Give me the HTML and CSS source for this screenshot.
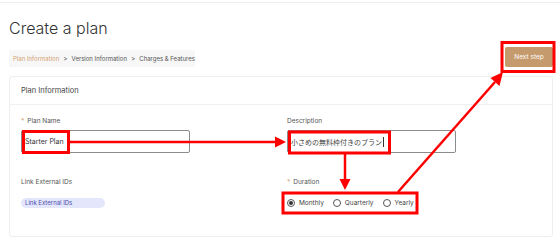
FILE: index.html
```html
<!DOCTYPE html>
<html lang="en">
<head>
<meta charset="utf-8">
<link rel="stylesheet" href="styles.css">
</head>
<body>
<div class="topbar"></div>
<div class="page">
  <h1 class="title">Create a plan</h1>
  <div class="toolbar">
    <nav class="crumbs">
      <span class="crumb active">Plan Information</span>
      <span class="sep">&gt;</span>
      <span class="crumb">Version Information</span>
      <span class="sep">&gt;</span>
      <span class="crumb">Charges &amp; Features</span>
    </nav>
    <button class="next">Next step</button>
  </div>
  <section class="card">
    <div class="card-head">Plan Information</div>
    <div class="card-body">
      <div class="field">
        <label class="label"><span class="req">*</span>Plan Name</label>
        <div class="input">Starter Plan</div>
      </div>
      <div class="field">
        <label class="label">Description</label>
        <div class="input jp">小さめの無料枠付きのプラン<span class="caret"></span></div>
      </div>
      <div class="field">
        <label class="label">Link External IDs</label>
        <div class="pill-row"><span class="pill">Link External IDs</span></div>
      </div>
      <div class="field">
        <label class="label"><span class="req">*</span>Duration</label>
        <div class="radios">
          <span class="radio checked"><span class="dot"></span>Monthly</span>
          <span class="radio"><span class="dot"></span>Quarterly</span>
          <span class="radio"><span class="dot"></span>Yearly</span>
        </div>
      </div>
    </div>
  </section>
</div>
<svg class="overlay" width="560" height="244" viewBox="0 0 560 244">
  <g fill="none" stroke="#f00" stroke-width="3">
    <rect x="502" y="42.5" width="52" height="29"/>
    <rect x="23.5" y="131.5" width="45" height="21"/>
    <rect x="289.5" y="132" width="100" height="21"/>
    <rect x="283" y="193" width="134" height="20"/>
  </g>
  <g stroke="#f00" stroke-width="2.5">
    <line x1="69" y1="142" x2="276" y2="142"/>
    <line x1="345" y1="153" x2="345" y2="180"/>
    <line x1="398" y1="192" x2="495" y2="82"/>
  </g>
  <g fill="#f00">
    <polygon points="286,142 275,136.5 275,147.5"/>
    <polygon points="345,190 339.5,179 350.5,179"/>
    <polygon points="503,72 499.5,86 490.5,78"/>
  </g>
</svg>
</body>
</html>
```

FILE: styles.css
```css
* { box-sizing: border-box; }
html, body { margin: 0; padding: 0; background: #fff; }
body {
  width: 560px;
  height: 244px;
  overflow: hidden;
  position: relative;
  font-family: Inter, "Liberation Sans", "Noto Sans CJK JP", sans-serif;
  color: #444;
}
.topbar { height: 3px; border-bottom: 1px solid #eeeeee; }
.page { padding: 0 7px 0 9px; }
.title {
  margin: 14px 0 0 0;
  font-size: 16px;
  font-weight: 300;
  color: #333;
  line-height: 22px;
  letter-spacing: 0;
}
.toolbar {
  display: flex;
  justify-content: space-between;
  align-items: flex-end;
  margin-top: 8px;
}
.crumbs {
  display: flex;
  align-items: center;
  gap: 4px;
  height: 17px;
  padding: 0 4px;
  background: #f7f7f7;
  font-size: 6px;
  color: #555;
  width: 186px;
  white-space: nowrap;
  flex-shrink: 0;
}
.crumb.active { color: #d4a373; }
.sep { color: #666; font-size: 6.5px; }
.next {
  width: 48px;
  height: 20px;
  border: none;
  border-radius: 2px;
  background: #c59a6d;
  color: #fff;
  font-family: inherit;
  font-size: 6.5px;
  padding: 0;
  white-space: nowrap;
}
.card {
  margin-top: 9px;
  border: 1px solid #eeeeee;
  border-radius: 3px;
  height: 161px;
}
.card-head {
  height: 28px;
  border-bottom: 1px solid #f0f0f0;
  padding-left: 11px;
  display: flex;
  align-items: center;
  font-size: 7.5px;
  color: #444;
}
.card-body {
  display: grid;
  grid-template-columns: 266px 1fr;
  row-gap: 25px;
  padding: 12px 11px 0 11px;
}
.field { display: flex; flex-direction: column; }
.label {
  font-size: 6.5px;
  line-height: 9px;
  color: #555;
  height: 9px;
  white-space: nowrap;
}
.req { color: #d9a877; margin-right: 3px; }
.input {
  margin-top: 4px;
  width: 169px;
  height: 23px;
  border: 1.5px solid #8c8c8c;
  border-radius: 2px;
  display: flex;
  align-items: center;
  padding-left: 3px;
  font-size: 7px;
  color: #333;
  white-space: nowrap;
}
.input.jp { font-size: 7px; color: #444; }
.caret {
  display: inline-block;
  width: 1px;
  height: 10px;
  background: #333;
  margin-left: 1px;
}
.pill-row { margin-top: 11px; display: flex; }
.pill {
  width: 84px;
  height: 10px;
  border-radius: 5px;
  background: #e4e6fb;
  color: #4b4fab;
  font-size: 6px;
  line-height: 10px;
  padding-left: 4px;
  white-space: nowrap;
}
.radios {
  margin-top: 11px;
  display: flex;
  align-items: center;
  gap: 9px;
  font-size: 6.5px;
  color: #444;
  height: 10px;
  white-space: nowrap;
}
.radio { display: flex; align-items: center; gap: 4px; }
.dot {
  width: 8px;
  height: 8px;
  border: 1px solid #555;
  border-radius: 50%;
  display: flex;
  align-items: center;
  justify-content: center;
}
.radio.checked .dot::after {
  content: "";
  width: 4px;
  height: 4px;
  border-radius: 50%;
  background: #333;
}
.overlay { position: absolute; left: 0; top: 0; }
```
